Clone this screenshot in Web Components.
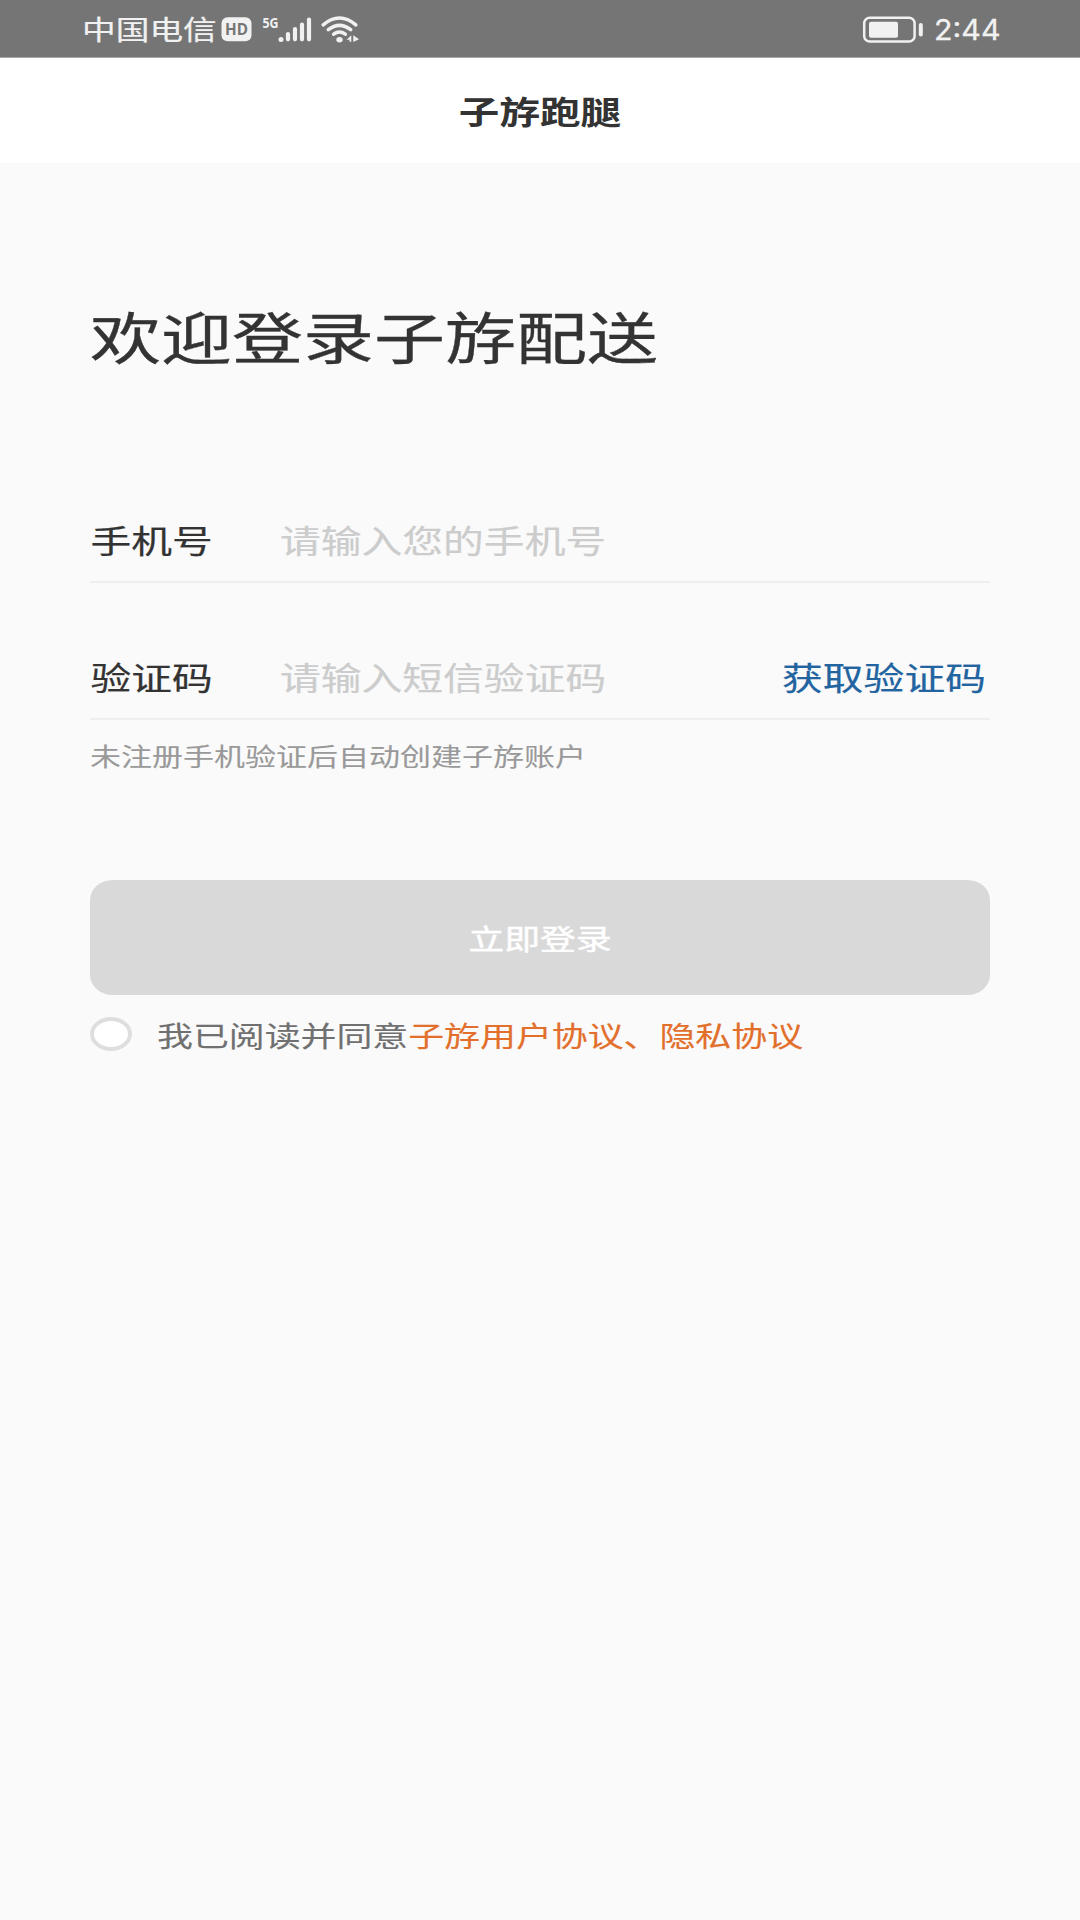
<!DOCTYPE html>
<html lang="zh-CN">
<head>
<meta charset="utf-8">
<title>子斿跑腿</title>
<style>
html,body{margin:0;height:100%}
body{background:#fafafa;font-family:"Noto Sans CJK SC",sans-serif}
</style>
</head>
<body>
<login-page></login-page>
<script>
const define=(name,html)=>{
  const t=document.createElement('template');
  t.innerHTML=html;
  customElements.define(name,class extends HTMLElement{
    constructor(){super();this.attachShadow({mode:'open'}).append(t.content.cloneNode(true));}
  });
};

/* Wide lettering: one line of text, flattened about its middle. */
define('wide-text',`<style>
:host{display:block;flex:none;white-space:nowrap;line-height:1;font-size:40.8px;height:1em;transform:scaleY(var(--flat,.79));transform-origin:50% 50%;-webkit-text-stroke:var(--ink,.25px) currentColor}
</style><slot></slot>`);

define('status-bar',`<style>
:host{display:flex;box-sizing:border-box;height:58px;background:#757575;color:#f1f1f1;align-items:center;padding:2px 79px 0 82px;border-bottom:1px solid #a8a8a8}
wide-text{font-size:33.7px;--flat:.8;margin-top:-1px}
svg{display:block;flex:none;overflow:visible}
.net{margin-left:4.5px}
.batt{margin-left:auto}
.time{margin-left:12px}
</style>
<wide-text>中国电信</wide-text>
<svg class="net" width="142" height="34" viewBox="0 0 142 34" fill="#f1f1f1">
<rect x="0.5" y="4.3" width="30" height="24" rx="6"/>
<text x="4" y="22" font-family="Open Sans" font-weight="700" font-size="15.5" fill="#757575" textLength="23" lengthAdjust="spacingAndGlyphs">HD</text>
<text x="41.5" y="15" font-family="Open Sans" font-weight="700" font-size="14.2" textLength="16" lengthAdjust="spacingAndGlyphs">5G</text>
<circle cx="60" cy="26.5" r="2.5"/>
<g stroke="#f1f1f1" stroke-width="4.2" stroke-linecap="round"><path d="M67 26.3V21M74 26.3V16M81 26.3V11.5M88 26.3V6.5"/></g>
<g fill="none" stroke="#f1f1f1" stroke-width="3.6" stroke-linecap="round"><path d="M102.2 11.8Q118.5 -1.8 134.8 11.8M107.3 16.7Q118.5 7.9 129.7 16.7M112.7 21.1Q118.5 16.9 124.3 21.1"/></g>
<ellipse cx="118.5" cy="26.7" rx="3.2" ry="2.7"/>
<path d="M130.3 22.2V28.7H128.5V26.7L125.5 26.7ZM132.3 22.2L138 26.2L132.3 29Z"/>
</svg>
<svg class="batt" width="60" height="28" viewBox="0 0 60 28"><rect x="1.2" y="1.8" width="50.4" height="23.8" rx="5.5" fill="none" stroke="#f1f1f1" stroke-width="2.5"/><rect x="6" y="5.7" width="29" height="16" rx="2" fill="#f1f1f1"/><rect x="55.8" y="7" width="4" height="13.5" rx="2" fill="#f1f1f1"/></svg>
<svg class="time" width="66" height="34" viewBox="0 0 66 34"><text x="-1" y="27" font-family="Inter" font-weight="400" font-size="28" fill="#f1f1f1" stroke="#f1f1f1" stroke-width=".3" textLength="66.5" lengthAdjust="spacingAndGlyphs">2:44</text></svg>
`);

define('nav-header',`<style>
:host{display:flex;height:105px;background:#fff;color:#333;align-items:center;justify-content:center;font-weight:700}
wide-text{font-size:40.6px;--ink:0;margin-top:2px}
</style><wide-text><slot></slot></wide-text>`);

define('form-row',`<style>
:host{display:flex;box-sizing:border-box;align-items:center;height:84px;border-bottom:2px solid #efefef;color:#333}
.label{margin-left:.5px}
.hint{color:#ccc;margin-left:67px}
.action{color:#2264a0;margin-left:auto;margin-right:4px}
wide-text{margin-top:-1px}
</style>
<wide-text class="label"><slot name="label"></slot></wide-text>
<wide-text class="hint"><slot></slot></wide-text>
<wide-text class="action"><slot name="action"></slot></wide-text>`);

define('submit-button',`<style>
:host{display:flex;height:115px;border-radius:23px/20px;background:#d9d9d9;color:#fff;align-items:center;justify-content:center}
wide-text{font-size:35.8px;--ink:.6px}
</style><wide-text><slot></slot></wide-text>`);

define('agree-line',`<style>
:host{display:flex;align-items:center;color:#707070}
i{box-sizing:border-box;width:42px;height:34px;border:4px solid #dedede;border-radius:50%;background:#fff;margin-right:25px}
wide-text{font-size:35.9px;--ink:.15px;margin-top:1px}
::slotted(a){color:#e2702c}
</style><i></i><wide-text><slot></slot></wide-text>`);

define('login-page',`<style>
:host{display:flex;flex-direction:column;height:1920px;width:1080px;background:#fafafa}
main{display:flex;flex-direction:column;padding:0 90px}
.title{font-size:71px;color:#333;margin-top:137px;--ink:.4px;--flat:.78}
.phone{margin-top:128px}
.code{margin-top:53px}
.note{font-size:31px;color:#999;margin-top:20px;--ink:.1px}
submit-button{margin-top:109px}
agree-line{margin-top:21px}
</style>
<status-bar></status-bar>
<nav-header>子斿跑腿</nav-header>
<main>
<wide-text class="title">欢迎登录子斿配送</wide-text>
<form-row class="phone"><span slot="label">手机号</span>请输入您的手机号</form-row>
<form-row class="code"><span slot="label">验证码</span>请输入短信验证码<span slot="action">获取验证码</span></form-row>
<wide-text class="note">未注册手机验证后自动创建子斿账户</wide-text>
<submit-button>立即登录</submit-button>
<agree-line>我已阅读并同意<a>子斿用户协议、隐私协议</a></agree-line>
</main>`);
</script>
</body>
</html>
